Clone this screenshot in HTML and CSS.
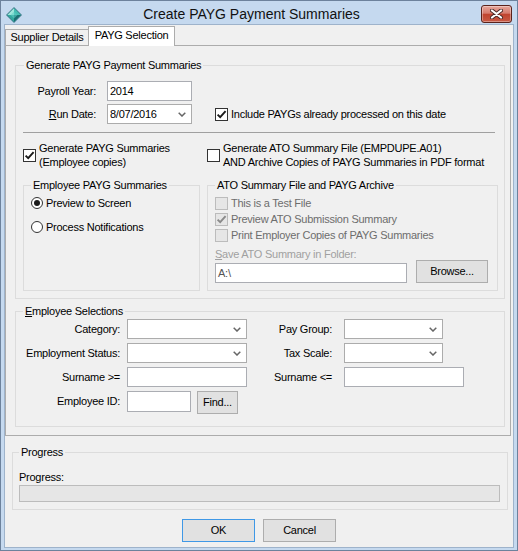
FILE: index.html
```html
<!DOCTYPE html>
<html>
<head>
<meta charset="utf-8">
<title>Create PAYG Payment Summaries</title>
<link rel="stylesheet" href="styles.css">
</head>
<body>
<div class="window">
  <div class="titlebar">
    <svg class="app-icon" width="16" height="16" viewBox="0 0 16 16">
      <polygon points="8,0.5 15.5,8 8,15.5 0.5,8" fill="#2a8f8b" stroke="#3b6e84" stroke-width="0.8"/>
      <polygon points="8,1.3 8,8 1.3,8" fill="#9fe6dc"/>
      <polygon points="8,1.3 14.7,8 8,8" fill="#47bdb3"/>
      <polygon points="1.3,8 8,8 8,14.7" fill="#34a79f"/>
      <polygon points="14.7,8 8,8 8,14.7" fill="#1b6e72"/>
      <polygon points="8,4.5 11.5,8 8,11.5 4.5,8" fill="#5fcfc4" opacity="0.55"/>
    </svg>
    <div class="title">Create PAYG Payment Summaries</div>
    <div class="close-btn">
      <svg width="13" height="10" viewBox="0 0 13 10">
        <path d="M2 1.5 L11 8.5 M11 1.5 L2 8.5" stroke="#4a2a28" stroke-width="4" stroke-linecap="round"/>
        <path d="M2 1.5 L11 8.5 M11 1.5 L2 8.5" stroke="#ffffff" stroke-width="2.2" stroke-linecap="round"/>
      </svg>
    </div>
  </div>

  <div class="client">
    <div class="tabs">
      <div class="tab tab-supplier">Supplier Details</div>
      <div class="tab tab-active">PAYG Selection</div>
    </div>

    <div class="tab-page">
      <fieldset class="group group-main">
        <legend class="legend-main">Generate PAYG Payment Summaries</legend>
        <div class="group-body main-body">
          <div class="run-grid">
            <span class="lbl">Payroll Year:</span>
            <div class="textbox">2014</div>
            <div></div>
            <span class="lbl"><u>R</u>un Date:</span>
            <div class="combo">
              <span>8/07/2016</span>
              <svg class="chev" width="8" height="5" viewBox="0 0 8 5"><path d="M0.7 0.7 L4 4 L7.3 0.7" fill="none" stroke="#666" stroke-width="1.5"/></svg>
            </div>
            <div class="check-item include-check">
              <span class="checkbox">
                <svg width="11" height="11" viewBox="0 0 11 11"><path d="M1.6 5.6 L4.2 8.2 L9.6 2.2" fill="none" stroke="#1a1a1a" stroke-width="1.9"/></svg>
              </span>
              <span>Include PAYGs already processed on this date</span>
            </div>
          </div>

          <div class="separator"></div>

          <div class="two-col gen-row">
            <div class="check-item">
              <span class="checkbox">
                <svg width="11" height="11" viewBox="0 0 11 11"><path d="M1.6 5.6 L4.2 8.2 L9.6 2.2" fill="none" stroke="#1a1a1a" stroke-width="1.9"/></svg>
              </span>
              <span class="multi">Generate PAYG Summaries<br>(Employee copies)</span>
            </div>
            <div class="check-item">
              <span class="checkbox"></span>
              <span class="multi">Generate ATO Summary File (EMPDUPE.A01)<br>AND Archive Copies of PAYG Summaries in PDF format</span>
            </div>
          </div>

          <div class="two-col sub-groups">
            <fieldset class="group">
              <legend>Employee PAYG Summaries</legend>
              <div class="group-body radio-body">
                <div class="radio-item"><span class="radio on"></span><span>Preview to Screen</span></div>
                <div class="radio-item"><span class="radio"></span><span>Process Notifications</span></div>
              </div>
            </fieldset>
            <fieldset class="group">
              <legend>ATO Summary File and PAYG Archive</legend>
              <div class="group-body ato-body">
                <div class="check-item disabled"><span class="checkbox"></span><span>This is a Test File</span></div>
                <div class="check-item disabled">
                  <span class="checkbox">
                    <svg width="11" height="11" viewBox="0 0 11 11"><path d="M1.6 5.6 L4.2 8.2 L9.6 2.2" fill="none" stroke="#8a8a8a" stroke-width="1.9"/></svg>
                  </span>
                  <span>Preview ATO Submission Summary</span>
                </div>
                <div class="check-item disabled"><span class="checkbox"></span><span>Print Employer Copies of PAYG Summaries</span></div>
                <div class="folder-label"><u>S</u>ave ATO Summary in Folder:</div>
                <div class="folder-row">
                  <div class="textbox folder-box">A:\</div>
                  <div class="button browse-btn">Browse...</div>
                </div>
              </div>
            </fieldset>
          </div>
        </div>
      </fieldset>

      <fieldset class="group group-select">
        <legend><u>E</u>mployee Selections</legend>
        <div class="group-body select-grid">
          <span class="lbl lbl-a">Category:</span>
          <div class="combo">
            <span></span>
            <svg class="chev" width="8" height="5" viewBox="0 0 8 5"><path d="M0.7 0.7 L4 4 L7.3 0.7" fill="none" stroke="#666" stroke-width="1.5"/></svg>
          </div>
          <span class="lbl lbl-b">Pay Group:</span>
          <div class="combo combo-narrow">
            <span></span>
            <svg class="chev" width="8" height="5" viewBox="0 0 8 5"><path d="M0.7 0.7 L4 4 L7.3 0.7" fill="none" stroke="#666" stroke-width="1.5"/></svg>
          </div>

          <span class="lbl lbl-a">Employment Status:</span>
          <div class="combo">
            <span></span>
            <svg class="chev" width="8" height="5" viewBox="0 0 8 5"><path d="M0.7 0.7 L4 4 L7.3 0.7" fill="none" stroke="#666" stroke-width="1.5"/></svg>
          </div>
          <span class="lbl lbl-b">Tax Scale:</span>
          <div class="combo combo-narrow">
            <span></span>
            <svg class="chev" width="8" height="5" viewBox="0 0 8 5"><path d="M0.7 0.7 L4 4 L7.3 0.7" fill="none" stroke="#666" stroke-width="1.5"/></svg>
          </div>

          <span class="lbl lbl-a">Surname &gt;=</span>
          <div class="textbox"></div>
          <span class="lbl lbl-b">Surname &lt;=</span>
          <div class="textbox wide-box"></div>

          <span class="lbl lbl-a">Employee ID:</span>
          <div class="id-row">
            <div class="textbox id-box"></div>
            <div class="button find-btn">Find...</div>
          </div>
          <span></span>
          <span></span>
        </div>
      </fieldset>
    </div>

    <fieldset class="group group-progress">
      <legend>Progress</legend>
      <div class="group-body progress-body">
        <div class="progress-label">Progress:</div>
        <div class="progress-bar"></div>
      </div>
    </fieldset>

    <div class="buttons">
      <div class="button ok-btn">OK</div>
      <div class="button cancel-btn">Cancel</div>
    </div>
  </div>
</div>
</body>
</html>
```

FILE: styles.css
```css
* {
  box-sizing: border-box;
}

html,
body {
  margin: 0;
  padding: 0;
}

body {
  font-family: "Liberation Sans", Arial, sans-serif;
  font-size: 11px;
  letter-spacing: -0.25px;
  color: #000;
  background: #c5d9ef;
}

/* window frame */
.window {
  width: 518px;
  height: 551px;
  border: 1px solid #6d829c;
  background: #c5d9ef;
  display: flex;
  flex-direction: column;
}

.titlebar {
  height: 24px;
  display: flex;
  align-items: flex-start;
  flex: none;
}

.app-icon {
  margin: 6px 0 0 5px;
  flex: none;
}

.title {
  flex: 1;
  text-align: center;
  font-size: 14px;
  letter-spacing: 0;
  line-height: 17px;
  margin-top: 5px;
  color: #111;
}

.close-btn {
  width: 31px;
  height: 18px;
  margin: 4px 5px 0 0;
  border: 1px solid #5a221b;
  border-radius: 3px;
  background: linear-gradient(#e6a79c 0%, #d67b6d 45%, #c0442f 52%, #c85a45 100%);
  box-shadow: inset 0 0 0 1px rgba(255, 255, 255, 0.35);
  display: flex;
  align-items: center;
  justify-content: center;
  flex: none;
}

.client {
  flex: 1;
  margin: 0 4px 3px 4px;
  background: #f0f0f0;
  box-shadow: 0 0 0 1px #9eb3cb;
  display: flex;
  flex-direction: column;
}

/* tab strip */
.tabs {
  height: 20px;
  display: flex;
  align-items: flex-end;
  flex: none;
}

.tab {
  border: 1px solid #acacac;
  border-bottom: none;
  text-align: center;
  background: #f0f0f0;
}

.tab-supplier {
  width: 83px;
  height: 16px;
  line-height: 15px;
  border-right: none;
}

.tab-active {
  position: relative;
  z-index: 1;
  width: 87px;
  height: 20px;
  line-height: 17px;
  margin-bottom: -1px;
  background: #fff;
}

.tab-page {
  margin-right: 2px;
  border: 1px solid #acacac;
  padding: 12px 0 8px 9px;
}

/* group boxes */
.group {
  border: 1px solid #dcdcdc;
  margin: 0;
  padding: 0;
  min-width: 0;
}

.group legend {
  padding: 0 2px;
  margin-left: 7px;
  line-height: 15px;
}

.group-main {
  width: 490px;
}

.group-main .legend-main {
  margin-left: 8px;
}

.main-body {
  padding: 8px 6px 7px 7px;
}

.lbl {
  line-height: 20px;
  text-align: right;
  white-space: nowrap;
}

.run-grid {
  display: grid;
  grid-template-columns: 73px 85px 1fr;
  column-gap: 11px;
  row-gap: 3px;
  grid-auto-rows: 20px;
}

.textbox {
  height: 20px;
  border: 1px solid #abadb3;
  background: #fff;
  padding: 0 2px;
  line-height: 18px;
}

.combo {
  height: 20px;
  border: 1px solid #acacac;
  background: #fff;
  padding: 0 5px 0 2px;
  line-height: 18px;
  display: flex;
  align-items: center;
  justify-content: space-between;
}

.chev {
  flex: none;
}

.check-item {
  display: flex;
  align-items: center;
  gap: 3px;
  white-space: nowrap;
}

.include-check {
  margin-left: 12px;
}

.checkbox {
  width: 13px;
  height: 13px;
  flex: none;
  border: 1px solid #333;
  background: #fff;
  display: flex;
  align-items: center;
  justify-content: center;
}

.check-item.disabled {
  color: #6d6d6d;
  line-height: 16px;
}

.check-item.disabled .checkbox {
  border-color: #bcbcbc;
  background: #e6e6e6;
}

.separator {
  height: 1px;
  background: #a0a0a0;
  margin: 8px 3px 0 0;
}

.two-col {
  display: grid;
  grid-template-columns: 177px 1fr;
  column-gap: 7px;
}

.gen-row {
  margin-top: 8px;
}

.multi {
  line-height: 14px;
}

.sub-groups {
  margin-top: 9px;
}

.radio-body {
  padding: 2px 0 0 7px;
  display: flex;
  flex-direction: column;
  gap: 8px;
}

.radio-item {
  display: flex;
  align-items: center;
  gap: 3px;
  line-height: 16px;
}

.radio {
  width: 12px;
  height: 12px;
  border: 1px solid #333;
  border-radius: 50%;
  background: #fff;
  display: flex;
  align-items: center;
  justify-content: center;
  flex: none;
}

.radio.on::after {
  content: "";
  width: 6px;
  height: 6px;
  border-radius: 50%;
  background: #1a1a1a;
}

.ato-body {
  padding: 2px 0 7px 7px;
}

.folder-label {
  margin-top: 5px;
  line-height: 12px;
  color: #a0a0a0;
}

.folder-row {
  display: flex;
  align-items: flex-end;
  gap: 9px;
}

.folder-box {
  width: 192px;
  color: #555;
}

.button {
  height: 23px;
  border: 1px solid #adadad;
  background: #e1e1e1;
  text-align: center;
  line-height: 21px;
}

.browse-btn {
  width: 72px;
}

/* employee selections */
.group-select {
  margin-top: 5px;
  width: 490px;
}

.select-grid {
  display: grid;
  grid-template-columns: 111px 120px 97px auto;
  grid-template-rows: 20px 20px 20px 23px;
  row-gap: 4px;
  padding: 0 0 12px 0;
}

.lbl-a {
  padding-right: 7px;
}

.lbl-b {
  padding-right: 12px;
}

.combo-narrow {
  width: 99px;
}

.wide-box {
  width: 120px;
}

.id-row {
  display: flex;
  gap: 6px;
  align-items: flex-start;
}

.id-box {
  width: 64px;
  height: 21px;
}

.find-btn {
  width: 41px;
}

/* progress */
.group-progress {
  margin: 9px 0 0 7px;
  width: 496px;
}

.group-progress legend {
  margin-left: 6px;
}

.progress-body {
  padding: 10px 6px 7px 6px;
}

.progress-label {
  line-height: 15px;
}

.progress-bar {
  width: 481px;
  height: 17px;
  border: 1px solid #bcbcbc;
  background: #e6e6e6;
}

.buttons {
  margin-top: 9px;
  display: flex;
  justify-content: center;
  gap: 8px;
}

.ok-btn,
.cancel-btn {
  width: 73px;
}

.ok-btn {
  border-color: #3f98e6;
}
```
